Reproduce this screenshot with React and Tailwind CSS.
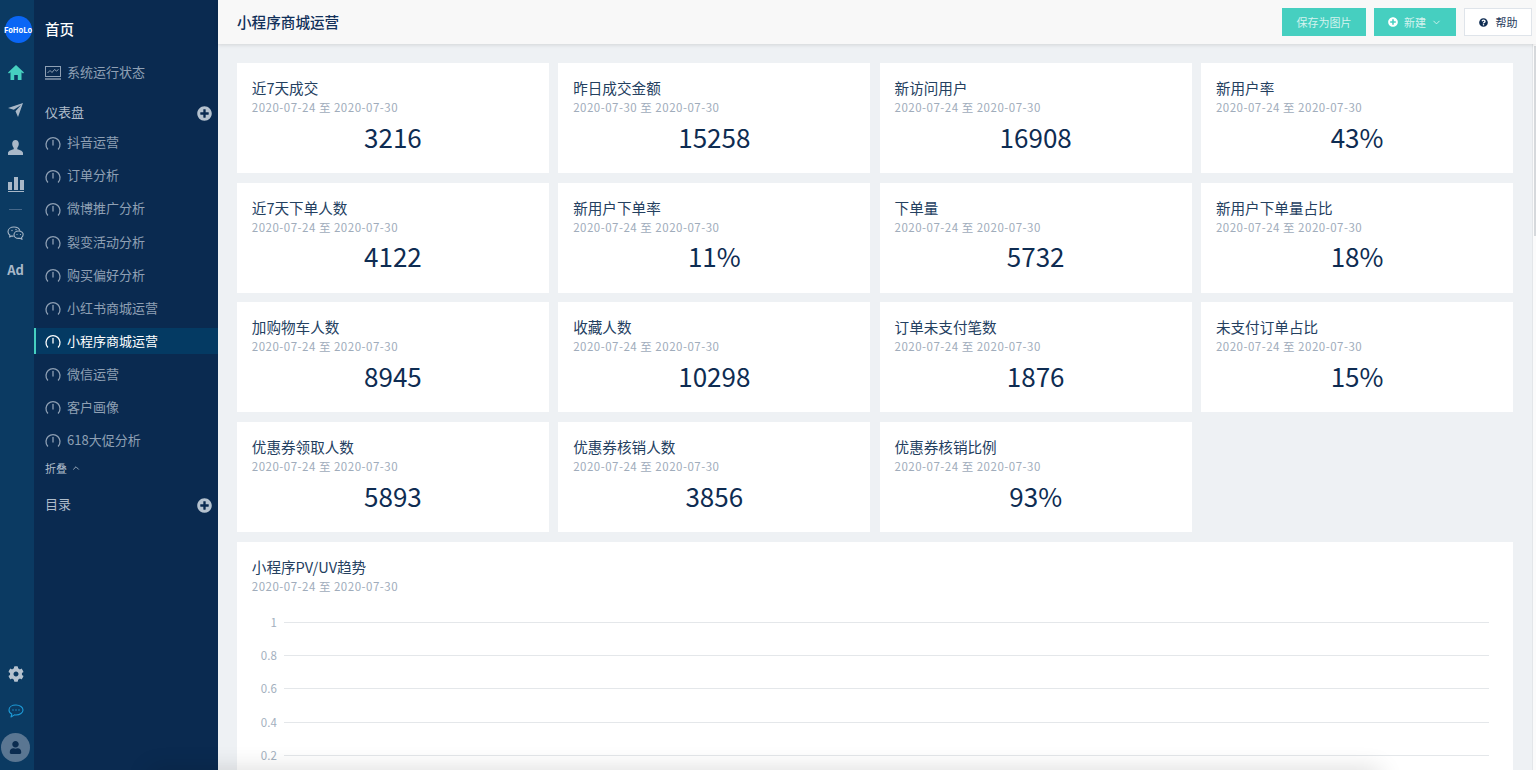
import * as React from "react";
import { FaCog, FaPlusCircle, FaQuestionCircle, FaUser } from "react-icons/fa";
import { FiChevronDown, FiChevronUp } from "react-icons/fi";

const cards = [
  { title: "近7天成交", date: "2020-07-24 至 2020-07-30", value: "3216" },
  { title: "昨日成交金额", date: "2020-07-30 至 2020-07-30", value: "15258" },
  { title: "新访问用户", date: "2020-07-24 至 2020-07-30", value: "16908" },
  { title: "新用户率", date: "2020-07-24 至 2020-07-30", value: "43%" },
  { title: "近7天下单人数", date: "2020-07-24 至 2020-07-30", value: "4122" },
  { title: "新用户下单率", date: "2020-07-24 至 2020-07-30", value: "11%" },
  { title: "下单量", date: "2020-07-24 至 2020-07-30", value: "5732" },
  { title: "新用户下单量占比", date: "2020-07-24 至 2020-07-30", value: "18%" },
  { title: "加购物车人数", date: "2020-07-24 至 2020-07-30", value: "8945" },
  { title: "收藏人数", date: "2020-07-24 至 2020-07-30", value: "10298" },
  { title: "订单未支付笔数", date: "2020-07-24 至 2020-07-30", value: "1876" },
  { title: "未支付订单占比", date: "2020-07-24 至 2020-07-30", value: "15%" },
  { title: "优惠券领取人数", date: "2020-07-24 至 2020-07-30", value: "5893" },
  { title: "优惠券核销人数", date: "2020-07-24 至 2020-07-30", value: "3856" },
  { title: "优惠券核销比例", date: "2020-07-24 至 2020-07-30", value: "93%" },
];

const navItems = [
  "抖音运营",
  "订单分析",
  "微博推广分析",
  "裂变活动分析",
  "购买偏好分析",
  "小红书商城运营",
  "小程序商城运营",
  "微信运营",
  "客户画像",
  "618大促分析",
];

const ticks = ["1", "0.8", "0.6", "0.4", "0.2"];

function Gauge({ className }) {
  return (
    <svg className={className} viewBox="0 0 16 16" fill="none" stroke="currentColor" strokeWidth="1.3" strokeLinecap="round">
      <path d="M2.6 14A7 7 0 1 1 13.4 14" />
      <path d="M8 5.5V10" />
    </svg>
  );
}

function Monitor({ className }) {
  return (
    <svg className={className} viewBox="0 0 16 14" fill="none" stroke="currentColor" strokeWidth="1">
      <rect x="0.5" y="0.5" width="15" height="10" />
      <path d="M2.5 7l2.5-2.5 2 2 2.5-3 2 1.500 2-1.500" />
      <path d="M0 13h16" strokeWidth="1.4" />
    </svg>
  );
}

function Home({ className }) {
  return (
    <svg className={className} viewBox="0 0 16 15" fill="currentColor">
      <path d="M8 0L16 7.500L15 8.500L13.500 7.300V15H9.800V10H6.200V15H2.500V7.300L1 8.500L0 7.500Z" />
    </svg>
  );
}

function Plane({ className }) {
  return (
    <svg className={className} viewBox="0 0 15 14" fill="currentColor">
      <path d="M15 0L10 14L7.500 8.300L13 2L5.800 6.800L0 5Z" />
    </svg>
  );
}

function Person({ className }) {
  return (
    <svg className={className} viewBox="0 0 15 15" fill="currentColor">
      <path d="M7.500 0C9.500 0 10.800 1.500 10.800 3.800C10.800 5.500 10.100 7 9.300 8V9.200C11.500 10 15 10.800 15 13V15H0V13C0 10.800 3.500 10 5.700 9.200V8C4.900 7 4.200 5.500 4.200 3.800C4.200 1.500 5.500 0 7.500 0Z" />
    </svg>
  );
}

function Bars({ className }) {
  return (
    <svg className={className} viewBox="0 0 16 15" fill="currentColor">
      <rect x="0" y="5" width="4" height="8" />
      <rect x="6" y="0" width="4" height="13" />
      <rect x="12" y="3" width="4" height="10" />
      <rect x="0" y="14" width="16" height="1" />
    </svg>
  );
}

function Wechat({ className }) {
  return (
    <svg className={className} viewBox="0 0 18 16" fill="none" stroke="currentColor" strokeWidth="1.1" strokeLinejoin="round">
      <path d="M7 1C3.600 1 1 3 1 5.700c0 1.500.8 2.700 2 3.500L2.600 11l2-1.100c.6.2 1.200.2 1.900.2" />
      <path d="M7 1c2.800 0 5.200 1.500 5.800 3.700" />
      <path d="M11.500 5C8.900 5 7 6.700 7 8.700s1.900 3.700 4.500 3.700c.5 0 1-.1 1.500-.2l2 1.200-.5-1.800c1-.7 1.600-1.700 1.600-2.900C16.600 6.700 14.100 5 11.500 5z" />
      <circle cx="5" cy="4.500" r="0.7" fill="currentColor" stroke="none" />
      <circle cx="9" cy="3.500" r="0.7" fill="currentColor" stroke="none" />
      <circle cx="10" cy="8.500" r="0.6" fill="currentColor" stroke="none" />
      <circle cx="13.500" cy="8.500" r="0.6" fill="currentColor" stroke="none" />
    </svg>
  );
}

function ChatDots({ className }) {
  return (
    <svg className={className} viewBox="0 0 16 14" fill="none" stroke="currentColor" strokeWidth="1.1">
      <path d="M8 1C4 1 1 3 1 6c0 1.800 1.100 3.300 2.800 4.100L3 13l3.500-2.100c.5.1 1 .1 1.500.1 4 0 7-2.200 7-5S12 1 8 1z" strokeLinejoin="round" />
      <circle cx="5" cy="6" r="0.7" fill="currentColor" stroke="none" />
      <circle cx="8" cy="6" r="0.7" fill="currentColor" stroke="none" />
      <circle cx="11" cy="6" r="0.7" fill="currentColor" stroke="none" />
    </svg>
  );
}

function StatCard({ title, date, value }) {
  return (
    <div className="h-[110px] bg-white px-[14.800px] pt-[14px]">
      <div className="text-[14.600px] leading-[22px] text-[#24405f]">{title}</div>
      <div className="text-[11.500px] leading-[16px] tracking-[0.5px] text-[#a0acbb]">{date}</div>
      <div className="mt-[3.500px] text-center text-[26px] leading-[36px] text-[#0e2c52]">{value}</div>
    </div>
  );
}

export default function App() {
  return (
    <div
      className="relative flex h-[770px] w-[1536px] overflow-hidden bg-[#eef1f4]"
      style={{ fontFamily: '"Noto Sans CJK SC", "Noto Sans", sans-serif' }}
    >
      <aside className="flex w-[34px] shrink-0 flex-col items-center bg-[#0b3a62] pb-[8px] pr-[3px] pt-[16px]">
        <div className="ml-[5px] flex h-[27px] w-[27px] shrink-0 items-center justify-center rounded-full bg-[#0a66f5] text-[7.500px] font-bold leading-none text-white">
          FoHoLo
        </div>
        <Home className="mt-[22px] h-[15px] w-[16px] text-[#46cfc0]" />
        <Plane className="mt-[23px] h-[14px] w-[15px] text-[#a9b8c8]" />
        <Person className="mt-[23px] h-[15px] w-[15px] text-[#a9b8c8]" />
        <Bars className="mt-[22px] h-[15px] w-[16px] text-[#a9b8c8]" />
        <div className="mt-[17px] h-px w-[13px] bg-[#47688a]" />
        <Wechat className="mt-[16px] h-[16px] w-[18px] text-[#a9b8c8]" />
        <div className="mt-[20px] text-[13px] font-bold leading-[16px] text-[#a9b8c8]">Ad</div>
        <FaCog className="mt-auto h-[16px] w-[16px] text-[#b5c2cf]" />
        <ChatDots className="mt-[22px] h-[14px] w-[16px] text-[#1d9ad6]" />
        <div className="mt-[15px] flex h-[29px] w-[29px] items-center justify-center rounded-full bg-[#5a7692]">
          <FaUser className="h-[13px] w-[13px] text-[#0b2c50]" />
        </div>
      </aside>

      <nav className="w-[184px] shrink-0 bg-[#0a2a50] pt-[19px] text-[#8fa0b4]">
        <div className="pl-[11px] text-[14.500px] font-medium leading-[20px] text-white">首页</div>
        <div className="mt-[24px] flex items-center pl-[11px] text-[13px] leading-[18px]">
          <Monitor className="mt-[1px] h-[14px] w-[16px]" />
          <span className="ml-[6px]">系统运行状态</span>
        </div>
        <div className="mt-[22px] flex items-center justify-between pl-[11px] pr-[6px] text-[13px] leading-[18px] text-[#b0bdcb]">
          <span>仪表盘</span>
          <FaPlusCircle className="mt-[3px] h-[15px] w-[15px] text-[#b5c2cf]" />
        </div>
        <ul className="mt-[8px] flex flex-col gap-[7.100px]">
          {navItems.map((item) => {
            const active = item === "小程序商城运营";
            return (
              <li
                key={item}
                className={
                  active
                    ? "flex h-[26px] items-center border-l-2 border-[#46cfc0] bg-[#043a63] pl-[9px] text-[13px] text-white"
                    : "flex h-[26px] items-center pl-[11px] text-[13px]"
                }
              >
                <Gauge className="mt-[1px] h-[16px] w-[16px]" />
                <span className="ml-[6px]">{item}</span>
              </li>
            );
          })}
        </ul>
        <div className="mt-[7px] flex items-center pl-[11px] text-[11px] leading-[16px] text-[#b0bdcb]">
          折叠
          <FiChevronUp className="ml-[4px] h-[10px] w-[10px]" />
        </div>
        <div className="mt-[19px] flex items-center justify-between pl-[11px] pr-[6px] text-[13px] leading-[18px] text-[#b0bdcb]">
          <span>目录</span>
          <FaPlusCircle className="mt-[3px] h-[15px] w-[15px] text-[#b5c2cf]" />
        </div>
      </nav>

      <main className="min-w-0 flex-1">
        <header className="relative z-10 flex h-[44px] items-center bg-[#f8f8f8] pl-[19px] pr-[4px] shadow-[0_1px_4px_rgba(0,0,0,0.12)]">
          <h1 className="text-[14.600px] font-medium text-[#12305a]">小程序商城运营</h1>
          <div className="ml-auto flex gap-[8px]">
            <button className="h-[28px] w-[84px] bg-[#46cfc0] text-[11px] text-[#d5f3ef]">保存为图片</button>
            <button className="flex h-[28px] w-[82px] items-center justify-center bg-[#46cfc0] text-[11px] text-[#d5f3ef]">
              <FaPlusCircle className="mr-[6px] h-[10px] w-[10px] text-white" />
              新建
              <FiChevronDown className="ml-[5px] h-[11px] w-[11px]" />
            </button>
            <button className="flex h-[28px] w-[68px] items-center justify-center border border-[#dfe4ea] bg-white text-[11px] text-[#1f3a5c]">
              <FaQuestionCircle className="mr-[8px] h-[9px] w-[9px] text-[#0e2c52]" />
              帮助
            </button>
          </div>
        </header>

        <div className="pl-[19px] pr-[23px] pt-[19px]">
          <div className="grid grid-cols-4 gap-x-[9.500px] gap-y-[9.700px]">
            {cards.map((card) => (
              <StatCard key={card.title} {...card} />
            ))}
          </div>
          <section className="mt-[9.700px] h-[300px] bg-white px-[14.800px] pt-[14px]">
            <div className="text-[14.600px] leading-[22px] text-[#24405f]">小程序PV/UV趋势</div>
            <div className="text-[11.500px] leading-[16px] tracking-[0.5px] text-[#a0acbb]">2020-07-24 至 2020-07-30</div>
            <div className="mt-[20px] flex flex-col gap-[16.300px] pr-[9px]">
              {ticks.map((t) => (
                <div key={t} className="flex h-[17px] items-center">
                  <span className="w-[25px] text-right text-[11.500px] text-[#a3afbe]">{t}</span>
                  <div className="ml-[7px] h-px flex-1 bg-[#e4e7ea]" />
                </div>
              ))}
            </div>
          </section>
        </div>
      </main>

      <div className="absolute right-0 top-[44px] h-[726px] w-[4px] border-l border-[#e3e6e9] bg-[#fbfbfb]" />
      <div className="absolute right-0 top-[46px] h-[190px] w-[2px] bg-[#d6d9dc]" />
      <div className="pointer-events-none absolute -bottom-[20px] left-[150px] h-[20px] w-[1230px] shadow-[0_0_24px_rgba(0,0,0,0.16)]" />
    </div>
  );
}
